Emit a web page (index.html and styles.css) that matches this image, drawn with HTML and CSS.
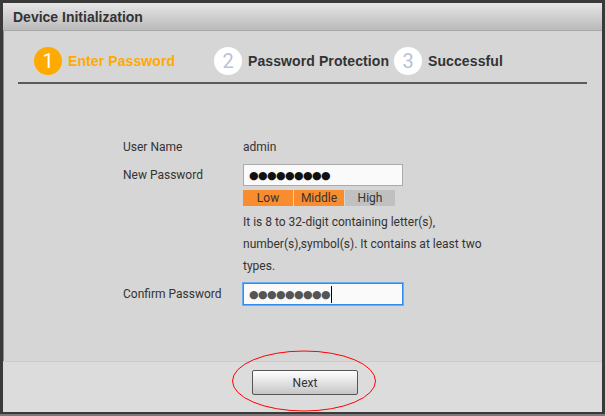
FILE: index.html
```html
<!DOCTYPE html>
<html lang="en">
<head>
    <meta charset="UTF-8">
    <meta name="viewport" content="width=device-width, initial-scale=1.0">
    <title>Device Initialization</title>
    <link rel="stylesheet" href="styles.css">
</head>
<body>
    <div class="window">
        <div class="title-bar">Device Initialization</div>

        <div class="content">
            <div class="steps">
                <div class="step active">
                    <span class="step-num">1</span>
                    <span class="step-label">Enter Password</span>
                </div>
                <div class="step">
                    <span class="step-num">2</span>
                    <span class="step-label">Password Protection</span>
                </div>
                <div class="step">
                    <span class="step-num">3</span>
                    <span class="step-label">Successful</span>
                </div>
            </div>

            <div class="form">
                <div class="form-row">
                    <div class="label">User Name</div>
                    <div class="value">admin</div>
                </div>

                <div class="form-row gap">
                    <div class="label">New Password</div>
                    <div class="field"><span class="dots">●●●●●●●●●</span></div>
                </div>

                <div class="form-row">
                    <div class="label"></div>
                    <div class="strength">
                        <span class="lvl on">Low</span>
                        <span class="lvl on">Middle</span>
                        <span class="lvl">High</span>
                    </div>
                </div>

                <div class="form-row">
                    <div class="label"></div>
                    <p class="hint">It is 8 to 32-digit containing letter(s), number(s),symbol(s). It contains at least two types.</p>
                </div>

                <div class="form-row gap">
                    <div class="label">Confirm Password</div>
                    <div class="field focused"><span class="dots grey">●●●●●●●●●</span><span class="caret"></span></div>
                </div>
            </div>
        </div>

        <div class="footer">
            <button class="btn-next">Next</button>
        </div>
    </div>

    <!-- annotation ring around the Next button -->
    <svg class="ring" width="146" height="63" viewBox="0 0 146 63">
        <ellipse cx="73" cy="31" rx="71.5" ry="30" fill="none" stroke="#f00" stroke-width="1"/>
    </svg>
</body>
</html>
```

FILE: styles.css
```css
html, body {
  margin: 0;
  height: 100%;
}

body {
  background: linear-gradient(#3a3a3a 0, #3a3a3a 414px, #7a7a7a 414px);
  font-family: Roboto, "Liberation Sans", sans-serif;
  color: #333;
  position: relative;
  overflow: hidden;
}

.window {
  margin: 3px 0 0 3px;
  width: 599px;
  height: 409px;
  background-color: #d6d6d6;
  display: flex;
  flex-direction: column;
  box-shadow: inset 1px 0 0 #8a8a8a;
}

.title-bar {
  height: 27px;
  line-height: 28px;
  padding-left: 10px;
  font-family: "Liberation Sans", Arial, sans-serif;
  font-size: 14px;
  font-weight: bold;
  color: #333;
  background: linear-gradient(#e6e6e6, #bababa);
  border-bottom: 1px solid #a8a8a8;
}

.content {
  flex: 1;
}

/* wizard steps */
.steps {
  display: flex;
  margin: 0 15px;
  padding: 16px 0 7px 16px;
  border-bottom: 2px solid #5a5a5a;
}

.step {
  width: 180px;
  display: flex;
  align-items: center;
}

.step-num {
  width: 28px;
  height: 28px;
  border-radius: 50%;
  background-color: #fff;
  color: #b7c3d6;
  font-size: 20px;
  line-height: 28px;
  text-align: center;
  flex-shrink: 0;
}

.step-label {
  margin-left: 6px;
  font-family: "Liberation Sans", Arial, sans-serif;
  font-size: 14px;
  font-weight: bold;
  letter-spacing: 0.1px;
  color: #333;
  white-space: nowrap;
}

.step.active .step-num {
  background-color: #ffaa00;
  color: #fff;
}

.step.active .step-label {
  color: #ffaa00;
}

/* form */
.form {
  margin: 52px 0 0 120px;
  font-size: 12px;
}

.form-row {
  display: flex;
  align-items: center;
}

.form-row.gap {
  margin-top: 6px;
}

.label {
  width: 120px;
  line-height: 22px;
}

.value {
  line-height: 22px;
}

.field {
  width: 153px;
  height: 20px;
  border: 1px solid #aaa;
  background-color: #fafafa;
  display: flex;
  align-items: center;
  padding-left: 5px;
}

.field.focused {
  border-color: #2f8cf0;
  box-shadow: 0 0 0 1px #66aef5;
}

.dots {
  font-family: "DejaVu Sans", sans-serif;
  font-size: 11px;
  letter-spacing: -0.6px;
  color: #111;
}

.dots.grey {
  color: #555;
}

.caret {
  width: 1px;
  height: 17px;
  background-color: #000;
  margin-left: 1px;
}

.strength {
  display: flex;
  gap: 1px;
  margin-top: 4px;
}

.lvl {
  width: 50px;
  height: 16px;
  line-height: 16px;
  text-align: center;
  background-color: #c0c0c0;
}

.lvl.on {
  background-color: #fa8c30;
}

.hint {
  width: 240px;
  margin: 5px 0 0;
  line-height: 22px;
}

/* footer */
.footer {
  height: 50px;
  background-color: #dcdcdc;
  border-top: 1px solid #cbcbcb;
  display: flex;
  justify-content: center;
  align-items: flex-start;
}

.btn-next {
  margin: 8px 0 0 5px;
  width: 106px;
  height: 25px;
  border: 1px solid #555;
  border-radius: 2px;
  background: linear-gradient(#ffffff, #c6c6c6);
  font-family: Roboto, "Liberation Sans", sans-serif;
  font-size: 12px;
  color: #333;
}

.ring {
  position: absolute;
  left: 231px;
  top: 350px;
}
```
